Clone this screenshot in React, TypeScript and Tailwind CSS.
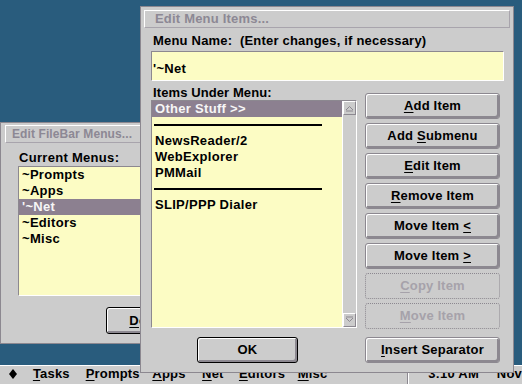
import React from "react";

function U({ children }: { children: React.ReactNode }) {
  return <span className="underline underline-offset-[2px] decoration-1">{children}</span>;
}

function Btn({
  children,
  disabled = false,
  def = false,
  className = "",
}: {
  children: React.ReactNode;
  disabled?: boolean;
  def?: boolean;
  className?: string;
}) {
  const base =
    "flex items-center justify-center text-[13px] tracking-[0.2px] font-bold rounded-[3px] bg-[#cccccc] whitespace-nowrap ";
  const look = disabled
    ? "border border-dotted border-[#8c8890] text-[#a6a2aa]"
    : def
    ? "border border-black text-black shadow-[inset_1px_1px_0_#ffffff,inset_-2px_-2px_0_#8c8890]"
    : "border border-[#8c8890] text-black shadow-[inset_1px_1px_0_#ffffff,inset_-2px_-2px_0_#8c8890]";
  return <div className={base + look + " " + className}>{children}</div>;
}

function Row({ text, sel = false }: { text: string; sel?: boolean }) {
  return (
    <div
      className={
        "h-[16px] leading-[16px] pl-[3px] whitespace-nowrap text-[13px] tracking-[0.3px] font-bold " +
        (sel ? "bg-[#8c8090] text-[#f6f6f6]" : "text-black")
      }
    >
      {text}
    </div>
  );
}

function Sep() {
  return (
    <div className="h-[16px] flex items-center pl-[2px]">
      <div className="w-[168px] h-[2px] bg-black" />
    </div>
  );
}

function ArrowBox({ up }: { up: boolean }) {
  return (
    <div className="w-[13px] h-[14px] border border-t-white border-l-white border-b-[#8c8890] border-r-[#8c8890] bg-[#cccccc] flex items-center justify-center">
      <svg width="11" height="10" viewBox="0 0 11 10">
        {up ? (
          <path d="M2 7 L5.5 3.5 L9 7 M2 8 L9 8" stroke="#8c8890" strokeWidth="1" fill="none" />
        ) : (
          <path d="M2 3 L5.5 6.5 L9 3 M2 2 L9 2" stroke="#8c8890" strokeWidth="1" fill="none" />
        )}
      </svg>
    </div>
  );
}

export default function App() {
  return (
    <div className="relative w-[522px] h-[384px] overflow-hidden bg-[#295c7d] flex flex-col font-['Liberation_Sans',Arial,sans-serif]">
      <div className="flex-1" />

      {/* Taskbar */}
      <div className="h-[19px] shrink-0 bg-[#cccccc] border-t border-white flex items-start leading-[15px] text-[13px] tracking-[0.2px] font-bold text-black whitespace-nowrap">
        <div className="w-[33px] h-[15px] pl-[9px] flex items-center">
          <svg width="8" height="10" viewBox="0 0 8 10">
            <path d="M4 0 L8 5 L4 10 L0 5 Z" fill="#000" />
          </svg>
        </div>
        <div className="w-[53px]"><U>T</U>asks</div>
        <div className="w-[67px]"><U>P</U>rompts</div>
        <div className="w-[50px]"><U>A</U>pps</div>
        <div className="w-[37px]"><U>N</U>et</div>
        <div className="w-[59px]"><U>E</U>ditors</div>
        <div className="w-[110px]"><U>M</U>isc</div>
        <div className="self-stretch w-[2px] border-l border-[#8c8890] bg-white" />
        <div className="w-[69px] pl-[19px] box-content">3:10 AM</div>
        <div>Nov</div>
      </div>

      {/* Edit FileBar Menus window */}
      <div className="absolute z-10 left-0 top-[122px] w-[300px] h-[222px] bg-[#cccccc] border border-[#8c8890] pt-[2px] pl-[4px] pr-[3px] flex flex-col">
        <div className="h-[18px] shrink-0 border border-t-white border-l-white border-b-[#a8a4ac] border-r-[#a8a4ac] pl-[6px] leading-[16px] text-[12px] tracking-[0.1px] font-bold text-[#8c8894] whitespace-nowrap">
          Edit FileBar Menus...
        </div>
        <div className="mt-[8px] pl-[14px] leading-[14px] text-[13px] tracking-[0.3px] font-bold text-black">
          Current Menus:
        </div>
        <div className="mt-[1px] ml-[13px] h-[130px] shrink-0 bg-[#fcfcc4] border border-t-[#8c8890] border-l-[#8c8890] border-b-white border-r-white">
          <Row text="~Prompts" />
          <Row text="~Apps" />
          <Row text="'~Net" sel />
          <Row text="~Editors" />
          <Row text="~Misc" />
        </div>
        <Btn def className="mt-[11px] ml-[101px] w-[80px] h-[27px] shrink-0">
          <span><U>D</U>one</span>
        </Btn>
      </div>

      {/* Edit Menu Items window */}
      <div className="absolute z-20 left-[140px] top-[6px] w-[374px] h-[367px] bg-[#cccccc] border border-[#8c8890] p-[3px] flex flex-col">
        <div className="h-[18px] shrink-0 border border-t-white border-l-white border-b-[#a8a4ac] border-r-[#a8a4ac] pl-[10px] leading-[16px] text-[13px] tracking-[0.2px] font-bold text-[#8c8894] whitespace-nowrap">
          Edit Menu Items...
        </div>
        <div className="mt-[6px] pl-[9px] leading-[14px] text-[13px] tracking-[0.2px] font-bold text-black whitespace-pre">
          {"Menu Name:  (Enter changes, if necessary)"}
        </div>
        <div className="mt-[3px] ml-[7px] w-[353px] h-[30px] shrink-0 bg-[#fcfcc4] border border-t-[#8c8890] border-l-[#8c8890] border-b-white border-r-white pt-[10px] pl-[1px] leading-[14px] text-[13px] tracking-[0.3px] font-bold text-black">
          '~Net
        </div>

        <div className="mt-[5px] flex">
          {/* left column */}
          <div className="ml-[7px] w-[206px] flex flex-col">
            <div className="pl-[2px] h-[14px] leading-[14px] text-[13px] tracking-[0.1px] font-bold text-black whitespace-nowrap">
              Items Under Menu:
            </div>
            <div className="h-[228px] shrink-0 bg-[#fcfcc4] border border-t-[#8c8890] border-l-[#8c8890] border-b-white border-r-white flex">
              <div className="flex-1">
                <Row text="Other Stuff >>" sel />
                <Sep />
                <Row text="NewsReader/2" />
                <Row text="WebExplorer" />
                <Row text="PMMail" />
                <Sep />
                <Row text="SLIP/PPP Dialer" />
              </div>
              <div className="w-[14px] bg-[#cccccc] border-l border-white flex flex-col justify-between">
                <ArrowBox up />
                <ArrowBox up={false} />
              </div>
            </div>
            <Btn def className="mt-[9px] ml-[46px] w-[101px] h-[26px] shrink-0">
              OK
            </Btn>
          </div>

          {/* right column */}
          <div className="ml-[8px] w-[135px] pt-[7px] flex flex-col gap-[4px]">
            <Btn className="h-[26px] shrink-0"><span><U>A</U>dd Item</span></Btn>
            <Btn className="h-[26px] shrink-0"><span>Add <U>S</U>ubmenu</span></Btn>
            <Btn className="h-[26px] shrink-0"><span><U>E</U>dit Item</span></Btn>
            <Btn className="h-[26px] shrink-0"><span><U>R</U>emove Item</span></Btn>
            <Btn className="h-[26px] shrink-0"><span>Move Item <U>{"<"}</U></span></Btn>
            <Btn className="h-[26px] shrink-0"><span>Move Item <U>{">"}</U></span></Btn>
            <Btn disabled className="h-[26px] shrink-0"><span><U>C</U>opy Item</span></Btn>
            <Btn disabled className="h-[26px] shrink-0"><span><U>M</U>ove Item</span></Btn>
            <Btn className="h-[26px] shrink-0 mt-[4px]"><span><U>I</U>nsert Separator</span></Btn>
          </div>
        </div>
      </div>
    </div>
  );
}
